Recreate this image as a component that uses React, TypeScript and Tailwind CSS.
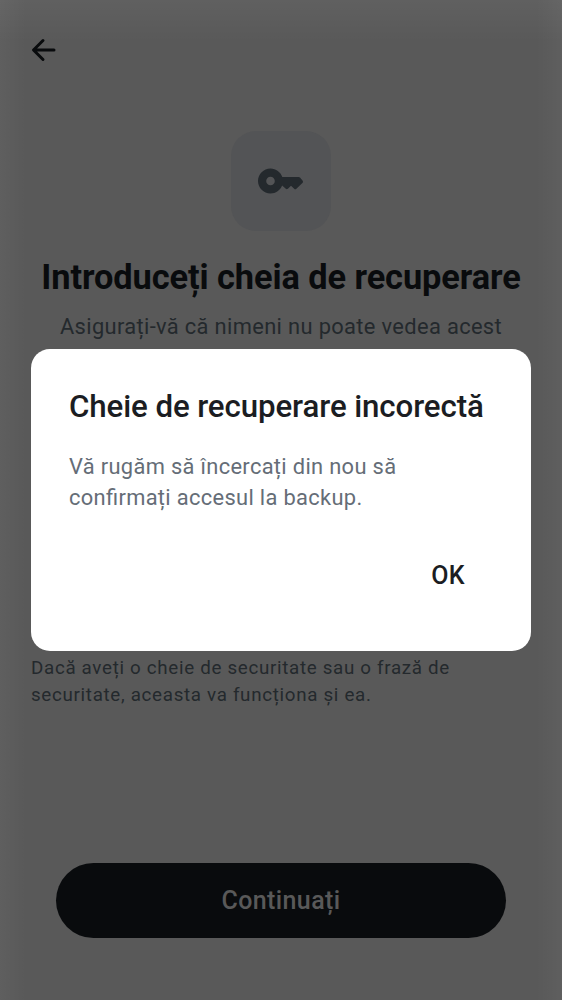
export default function App() {
  return (
    <main className="relative flex h-[1000px] w-[562px] flex-col overflow-hidden bg-[#595959] bg-[linear-gradient(to_right,#ffffff09,transparent_26px,transparent_536px,#ffffff09),linear-gradient(to_bottom,#ffffff0b,transparent_42px)] font-['Roboto',sans-serif] text-[#090b0d]">
      <header className="h-[131px] pl-[31px] pt-[37px]">
        <button aria-label="Înapoi" className="block">
          <svg width="26" height="26" viewBox="0 0 26 26" fill="none" stroke="currentColor" strokeWidth="3" strokeLinecap="round" strokeLinejoin="round">
            <path d="M12 3.5 2.5 13l9.5 9.5M3 13h20" />
          </svg>
        </button>
      </header>
      <section className="flex flex-col items-center">
        <div className="flex size-[100px] items-center justify-center rounded-[25px] bg-[#535456] text-[#24292d]">
          <svg width="50" height="50" viewBox="0 0 50 50" fill="currentColor">
            <path fillRule="evenodd" d="M14.5 12.5C7.600 12.500 2 18.100 2 25s5.600 12.500 12.500 12.500c5.300 0 9.800-3.300 11.600-8l3.700 3.200c.7.6 1.400.6 2.100 0l3.100-2.900 3.200 3c.7.7 1.500.7 2.200 0l6-5.800c.8-.8.8-1.800.1-2.600L44 21.600c-.4-.4-.8-.6-1.400-.6H26.300C24.600 16.100 20 12.500 14.500 12.500Zm0 8.200a4.300 4.300 0 1 1 0 8.600 4.300 4.300 0 0 1 0-8.600Z" />
          </svg>
        </div>
        <h1 className="mt-[26px] whitespace-nowrap text-[34.375px] font-bold leading-[40px] tracking-[-0.08px]">Introduceți cheia de recuperare</h1>
        <p className="mt-[14px] whitespace-nowrap text-[21.875px] leading-[31px] tracking-[0.35px] text-[#24292d]">Asigurați-vă că nimeni nu poate vedea acest</p>
      </section>
      <p className="mt-[313px] whitespace-nowrap pl-[31px] text-[18.75px] leading-[27px] tracking-[0.69px] text-[#24292d]">Dacă aveți o cheie de securitate sau o frază de<br />securitate, aceasta va funcționa și ea.</p>
      <button className="mx-14 mt-[153.5px] h-[75px] rounded-full bg-[#090b0d] pt-px text-[25px] font-medium tracking-[0.4px] text-[#595959]">Continuați</button>
      <section role="dialog" aria-modal="true" className="absolute left-[31px] top-[349px] flex h-[301.5px] w-[500px] flex-col rounded-[19px] bg-white px-[38px] pt-[38px]">
        <h2 className="whitespace-nowrap text-[31.25px] font-medium leading-[40px] tracking-[-0.1px] text-[#1b1d22]">Cheie de recuperare incorectă</h2>
        <p className="mt-[24px] whitespace-nowrap text-[21.875px] leading-[31px] tracking-[0.33px] text-[#656d77] [font-feature-settings:'liga'_1]">Vă rugăm să încercați din nou să<br />confirmați accesul la backup.</p>
        <button className="mr-[28px] mt-[44px] self-end text-[25px] font-medium leading-[38px] tracking-[0.4px] text-[#1b1d22]">OK</button>
      </section>
    </main>
  );
}
